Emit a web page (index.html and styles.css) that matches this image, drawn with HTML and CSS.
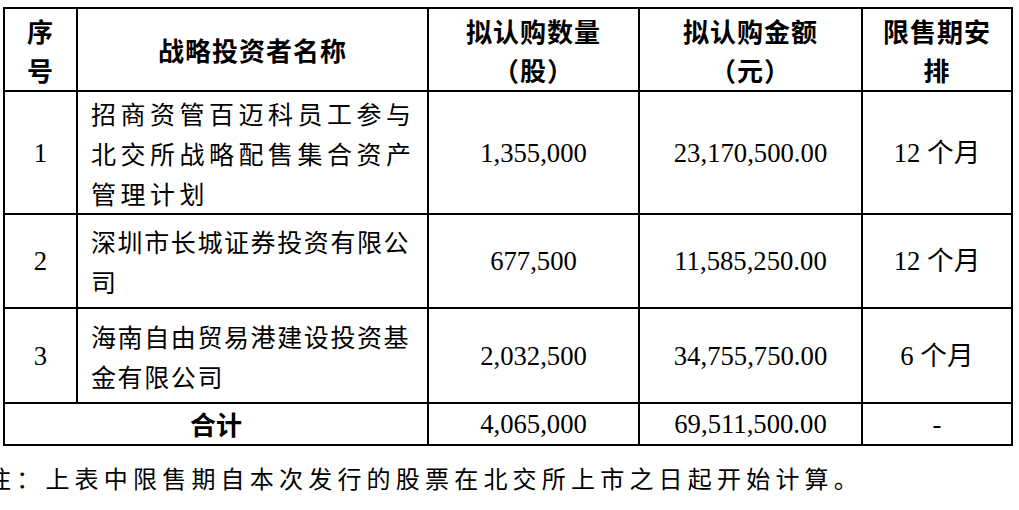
FILE: index.html
```html
<!DOCTYPE html>
<html lang="zh-CN">
<head>
<meta charset="utf-8">
<title>战略投资者</title>
<link rel="stylesheet" href="styles.css">
</head>
<body>
<table class="alloc">
  <colgroup>
    <col class="c-no">
    <col class="c-name">
    <col class="c-qty">
    <col class="c-amt">
    <col class="c-lock">
  </colgroup>
  <thead>
    <tr class="r-head">
      <th>序<br>号</th>
      <th>战略投资者名称</th>
      <th>拟认购数量<br>（股）</th>
      <th>拟认购金额<br>（元）</th>
      <th>限售期安<br>排</th>
    </tr>
  </thead>
  <tbody>
    <tr class="r-1">
      <td class="num">1</td>
      <td class="name spaced">招商资管百迈科员工参与北交所战略配售集合资产管理计划</td>
      <td class="num">1,355,000</td>
      <td class="num">23,170,500.00</td>
      <td class="num">12 个月</td>
    </tr>
    <tr class="r-2">
      <td class="num">2</td>
      <td class="name">深圳市长城证券投资有限公司</td>
      <td class="num">677,500</td>
      <td class="num">11,585,250.00</td>
      <td class="num">12 个月</td>
    </tr>
    <tr class="r-3">
      <td class="num">3</td>
      <td class="name">海南自由贸易港建设投资基金有限公司</td>
      <td class="num">2,032,500</td>
      <td class="num">34,755,750.00</td>
      <td class="num">6 个月</td>
    </tr>
    <tr class="r-total">
      <td class="total-label" colspan="2">合计</td>
      <td class="num">4,065,000</td>
      <td class="num">69,511,500.00</td>
      <td class="num">-</td>
    </tr>
  </tbody>
</table>
<p class="note">注：上表中限售期自本次发行的股票在北交所上市之日起开始计算。</p>
</body>
</html>
```

FILE: styles.css
```css
html, body {
  margin: 0;
  padding: 0;
  background: #ffffff;
  color: #000000;
}

body {
  font-family: "Liberation Serif", "Noto Sans CJK SC", serif;
  overflow: hidden;
}

.alloc {
  border-collapse: collapse;
  table-layout: fixed;
  width: 1010px;
  margin: 7px 0 0 3px;
}

.alloc th,
.alloc td {
  border: 2px solid #000;
  padding: 0;
  vertical-align: middle;
}

.c-no { width: 73px; }
.c-name { width: 351px; }
.c-qty { width: 211px; }
.c-amt { width: 223px; }
.c-lock { width: 150px; }

.alloc th {
  font-family: "Noto Sans CJK SC", sans-serif;
  font-weight: 700;
  font-size: 26px;
  line-height: 39px;
  letter-spacing: 1px;
  text-align: center;
}

.r-head { height: 83px; }
.r-1 { height: 123px; }
.r-2 { height: 94px; }
.r-3 { height: 95px; }
.r-total { height: 42px; }

.alloc td {
  font-size: 26.7px;
  line-height: 40px;
}

.num {
  text-align: center;
}

.name {
  text-align: left;
  padding: 0 9px 0 13px !important;
  font-family: "Noto Sans CJK SC", sans-serif;
  font-size: 25px !important;
  letter-spacing: 1.6px;
}

.name.spaced {
  letter-spacing: 4.5px;
}

.total-label {
  text-align: center;
  font-family: "Noto Sans CJK SC", sans-serif;
  font-weight: 700;
  font-size: 26px !important;
}

.note {
  margin: 12px 0 0 -13px;
  font-family: "Noto Sans CJK SC", sans-serif;
  font-size: 24px;
  line-height: 40px;
  letter-spacing: 5.2px;
  white-space: nowrap;
}
```
